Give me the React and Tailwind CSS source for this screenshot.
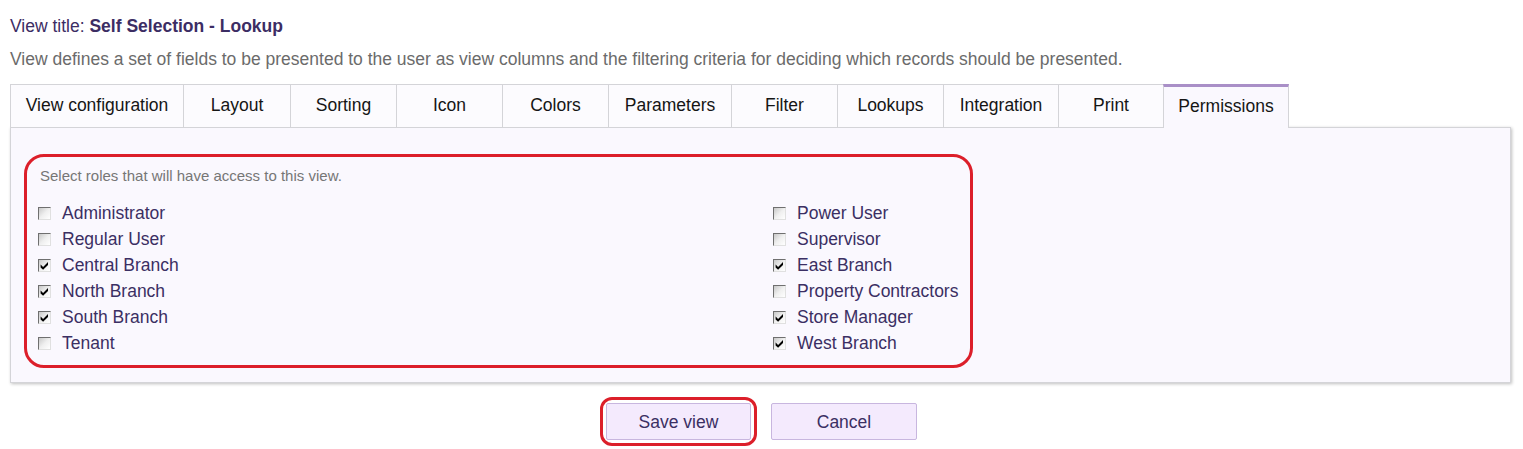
import React from "react";

const tabs = [
  ["View configuration", "w-[173px]"],
  ["Layout", "w-[107px]"],
  ["Sorting", "w-[106px]"],
  ["Icon", "w-[106px]"],
  ["Colors", "w-[106px]"],
  ["Parameters", "w-[123px]"],
  ["Filter", "w-[106px]"],
  ["Lookups", "w-[106px]"],
  ["Integration", "w-[115px]"],
  ["Print", "w-[105px]"],
];

const left = [
  ["Administrator", false],
  ["Regular User", false],
  ["Central Branch", true],
  ["North Branch", true],
  ["South Branch", true],
  ["Tenant", false],
];
const right = [
  ["Power User", false],
  ["Supervisor", false],
  ["East Branch", true],
  ["Property Contractors", false],
  ["Store Manager", true],
  ["West Branch", true],
];

function Box({ checked }) {
  return (
    <span className="relative inline-block w-[13px] h-[13px] border border-t-[#6f6f6f] border-l-[#6f6f6f] border-b-[#e0e0e0] border-r-[#e0e0e0] bg-gradient-to-br from-[#c8c8c8] via-[#efefef] to-[#ffffff] shrink-0">
      {checked && (
        <svg viewBox="0 0 11 11" className="absolute inset-0 w-[11px] h-[11px]">
          <path d="M1.6 4.6 L4.1 7 L9 2 L9 5 L4.1 9.8 L1.6 7.4 Z" fill="#000" />
        </svg>
      )}
    </span>
  );
}

function Row({ label, checked }) {
  return (
    <div className="flex items-center h-[26px]">
      <Box checked={checked} />
      <span className="ml-[11px] text-[17.5px] leading-[20px] text-[#3b2f63]">{label}</span>
    </div>
  );
}

export default function App() {
  return (
    <div className="bg-white min-h-[449px] px-[10px] pt-[16px] font-['Liberation_Sans',Arial,sans-serif]">
      <div className="text-[17.5px] leading-[20px] text-[#3c2d64]">
        View title: <span className="font-bold">Self Selection - Lookup</span>
      </div>
      <div className="mt-[13px] text-[17.5px] leading-[20px] text-[#6b6b6b]">
        View defines a set of fields to be presented to the user as view columns and the filtering criteria for deciding which records should be presented.
      </div>
      <div className="mt-[15px] flex relative z-10">
        {tabs.map(([t, w]) => (
          <div
            key={t}
            className={`${w} h-[43px] pb-[2px] flex items-center justify-center border-t border-l border-[#d4d4d8] bg-[#fcfbfe] text-[17.5px] text-[#151515]`}
          >
            {t}
          </div>
        ))}
        <div className="w-[126px] h-[44px] -mb-[1px] pb-[3px] flex items-center justify-center border-t-[3px] border-t-[#a98fc7] border-l border-r border-l-[#d4d4d8] border-r-[#d4d4d8] bg-[#faf8fe] text-[17.5px] text-[#151515]">
          Permissions
        </div>
      </div>
      <div className="w-[1501px] border border-[#d4d4d8] bg-[#faf8fe] shadow-[1px_1px_3px_rgba(0,0,0,0.25)] pt-[26px] pb-[14px] pl-[13px]">
        <div className="w-[949px] h-[214px] border-[3px] border-[#dc1f2a] rounded-[20px] pl-[11px] pt-[10px]">
          <div className="ml-[2px] text-[15px] leading-[17px] text-[#767676]">
            Select roles that will have access to this view.
          </div>
          <div className="mt-[16px] flex">
            <div className="w-[735px]">
              {left.map(([l, c]) => (
                <Row key={l} label={l} checked={c} />
              ))}
            </div>
            <div>
              {right.map(([l, c]) => (
                <Row key={l} label={l} checked={c} />
              ))}
            </div>
          </div>
        </div>
      </div>
      <div className="mt-[20px] flex justify-center gap-[20px]">
        <div className="relative">
          <button className="w-[145px] h-[37px] pt-[1px] bg-[#f4eafd] border border-[#c8b6df] rounded-[2px] text-[17.5px] text-[#3b2f63]">
            Save view
          </button>
          <span className="absolute -inset-[6px] border-[3px] border-[#dc1f2a] rounded-[12px] pointer-events-none" />
        </div>
        <button className="w-[146px] h-[37px] pt-[1px] bg-[#f4eafd] border border-[#c8b6df] rounded-[2px] text-[17.5px] text-[#3b2f63]">
          Cancel
        </button>
      </div>
    </div>
  );
}
